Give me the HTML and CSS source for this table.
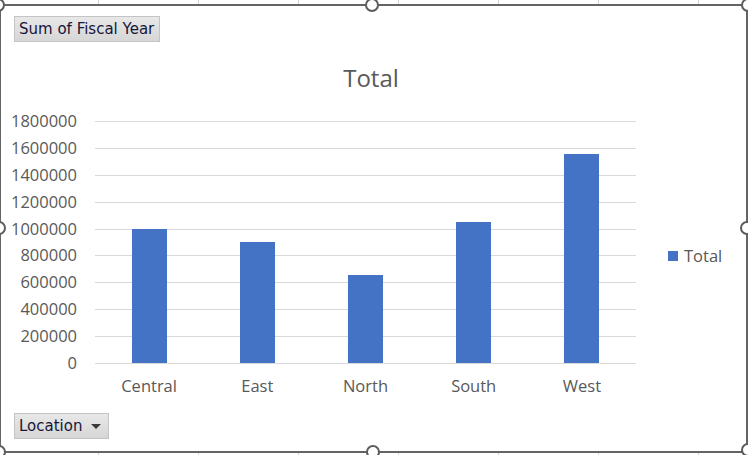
FILE: index.html
```html
<!DOCTYPE html>
<html>
<head>
<meta charset="utf-8">
<link rel="stylesheet" href="styles.css">
</head>
<body>
<div class="frame">
  <span class="handle h-tl"></span>
  <span class="handle h-tm"></span>
  <span class="handle h-tr"></span>
  <span class="handle h-ml"></span>
  <span class="handle h-mr"></span>
  <span class="handle h-bl"></span>
  <span class="handle h-bm"></span>
  <span class="handle h-br"></span>
  <div class="chart">
    <div class="field-btn sum">Sum of Fiscal Year</div>
    <div class="title">Total</div>
    <div class="main">
      <div class="yaxis">
        <span>1800000</span><span>1600000</span><span>1400000</span><span>1200000</span><span>1000000</span>
        <span>800000</span><span>600000</span><span>400000</span><span>200000</span><span>0</span>
      </div>
      <div class="plot">
        <div class="gridlines"><i></i><i></i><i></i><i></i><i></i><i></i><i></i><i></i><i></i><i></i></div>
        <div class="bars">
          <div class="bar" style="height:134px"></div>
          <div class="bar" style="height:121px"></div>
          <div class="bar" style="height:88px"></div>
          <div class="bar" style="height:141px"></div>
          <div class="bar" style="height:209px"></div>
        </div>
      </div>
      <div class="legend"><span class="swatch"></span>Total</div>
    </div>
    <div class="cats"><span>Central</span><span>East</span><span>North</span><span>South</span><span>West</span></div>
    <div class="field-btn loc">Location<span class="caret"></span></div>
  </div>
</div>
</body>
</html>
```
FILE: styles.css
```css
html, body {
  margin: 0;
  height: 100%;
  overflow: hidden;
}
body {
  background-color: #fff;
  background-image: linear-gradient(to right, #d6d6d6 1px, transparent 1px);
  background-size: 100px 100%;
  background-position: 98px 0;
  font-family: "Open Sans", "Noto Sans", sans-serif;
}
.frame {
  position: relative;
  margin: 4px 0 0 -1px;
  width: 749px;
  height: 449px;
  box-sizing: border-box;
  border: 2px solid #646464;
  background: #fff;
}
.handle {
  position: absolute;
  width: 14px;
  height: 14px;
  box-sizing: border-box;
  border: 2px solid #5c5c5c;
  border-radius: 50%;
  background: #fff;
}
.h-tl { left: -10px; top: -8px; }
.h-tm { left: 364px; top: -8px; }
.h-tr { left: 740px; top: -8px; }
.h-ml { left: -9px; top: 215px; }
.h-mr { left: 739px; top: 215px; }
.h-bl { left: -9px; top: 439px; }
.h-bm { left: 365px; top: 439px; }
.h-br { left: 740px; top: 437px; }

.chart {
  display: flex;
  flex-direction: column;
  align-items: flex-start;
  padding-top: 10px;
}
.field-btn {
  margin-left: 13px;
  height: 26px;
  box-sizing: border-box;
  border: 1px solid #c4c4c4;
  background: linear-gradient(#e8e8e8, #d6d6d6);
  display: flex;
  align-items: center;
  font-family: "DejaVu Sans", "Liberation Sans", sans-serif;
  font-size: 15px;
  color: #16163a;
  white-space: nowrap;
}
.sum {
  width: 146px;
  padding-left: 4px;
}
.loc {
  width: 95px;
  padding: 0 7px 0 4px;
  justify-content: space-between;
  margin-top: 17px;
}
.caret {
  width: 0;
  height: 0;
  border-left: 5px solid transparent;
  border-right: 5px solid transparent;
  border-top: 5px solid #3a3a3a;
}
.title {
  align-self: stretch;
  margin-top: 20px;
  padding-right: 5px;
  text-align: center;
  font-size: 24px;
  line-height: 32px;
  color: #595959;
}
.main {
  display: flex;
  align-items: flex-start;
  margin-top: 17px;
}
.yaxis {
  width: 76px;
  height: 262px;
  display: flex;
  flex-direction: column;
  justify-content: space-between;
  text-align: right;
  font-size: 16.5px;
  line-height: 20px;
  color: #595959;
}
.plot {
  margin-left: 18px;
  margin-top: 10px;
  width: 541px;
  display: grid;
}
.gridlines, .bars {
  grid-area: 1 / 1;
}
.gridlines {
  height: 243px;
  display: flex;
  flex-direction: column;
  justify-content: space-between;
}
.gridlines i {
  display: block;
  height: 1px;
  background: #d9d9d9;
}
.bars {
  height: 242px;
  display: grid;
  grid-template-columns: repeat(5, 1fr);
  align-items: end;
  justify-items: center;
}
.bar {
  width: 35px;
  background: #4472c4;
}
.legend {
  margin-left: 32px;
  margin-top: 135px;
  display: flex;
  align-items: center;
  gap: 6px;
  font-size: 16.5px;
  line-height: 20px;
  color: #595959;
}
.swatch {
  width: 10px;
  height: 10px;
  background: #4472c4;
}
.cats {
  margin-left: 94px;
  margin-top: 3px;
  width: 541px;
  display: grid;
  grid-template-columns: repeat(5, 1fr);
  text-align: center;
  font-size: 16.5px;
  line-height: 20px;
  color: #595959;
}
```
